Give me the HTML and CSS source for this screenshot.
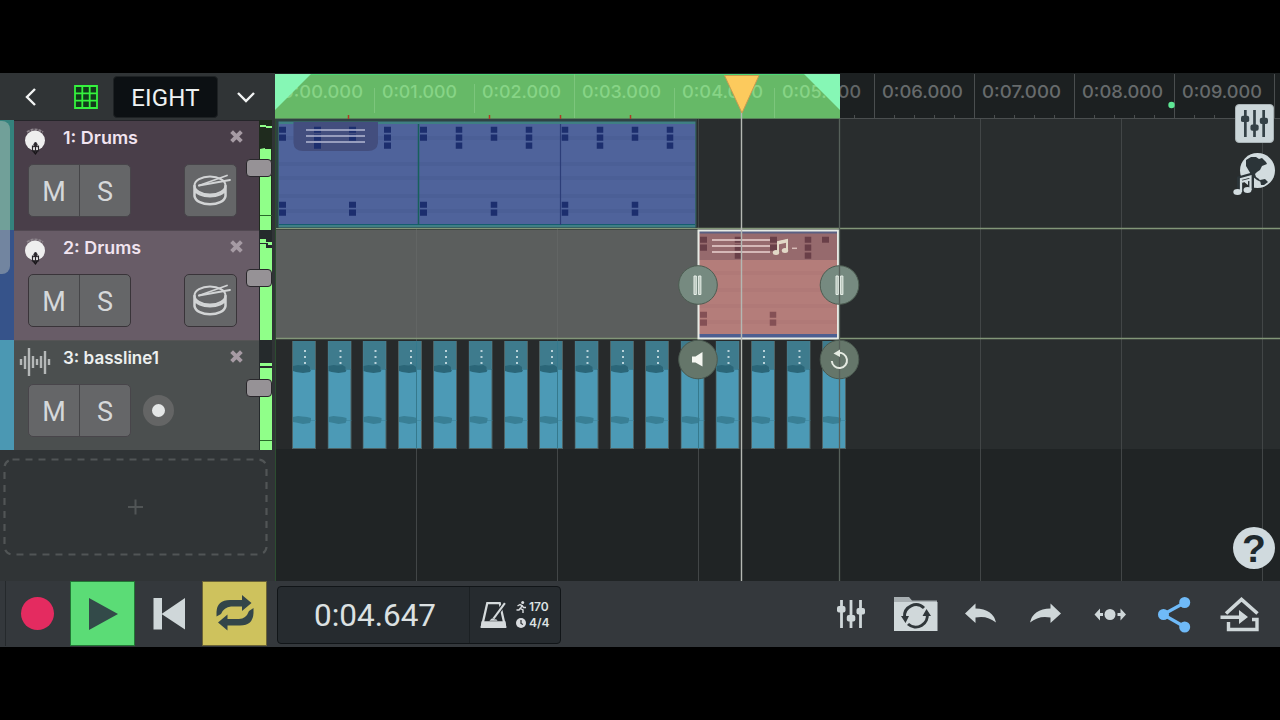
FILE: index.html
```html
<!DOCTYPE html>
<html lang="en">
<head>
<meta charset="utf-8">
<title>EIGHT</title>
<link rel="stylesheet" href="styles.css">
</head>
<body>
<svg class="defs" width="0" height="0">
  <defs>
    <linearGradient id="loop-edge" gradientUnits="userSpaceOnUse" x1="839" y1="0" x2="840" y2="0"><stop offset="0" stop-color="#87d486"/><stop offset="1" stop-color="#626667"/></linearGradient>
    <symbol id="drum" viewBox="0 0 38 32">
      <g fill="none" stroke="#d2d4d5" stroke-linecap="round">
        <ellipse cx="17" cy="11.500" rx="15.500" ry="9" stroke-width="2"/>
        <path d="M1.500 12V22C3 33 31 33 32.500 22V12M1.500 15C4 24.500 30 24.500 32.500 15" stroke-width="2.500"/>
        <path d="M6 11.500L34 1.500" stroke-width="1.800"/><path d="M6 11.500L37 6" stroke-width="1.800"/>
      </g>
    </symbol>
    <symbol id="close" viewBox="0 0 12 12"><path d="M1.500 1.500L10.500 10.500M10.500 1.500L1.500 10.500" stroke="#a69ba4" stroke-width="3.600"/></symbol>
    <symbol id="kit" viewBox="0 0 24 30">
      <path d="M4 5Q12 0 20 5" stroke="#8d858c" stroke-width="2" stroke-dasharray="3 1" fill="none"/>
      <path d="M6 20L12.500 28L18 20Z" fill="#151316"/>
      <circle cx="12" cy="13.500" r="10" fill="#eeeeee"/>
      <circle cx="12.500" cy="16.500" r="1.500" fill="#28242b"/>
      <path d="M9.500 19h6v5h-6zM10.500 17l4 3M14.500 17l-4 3M9 24h7M12.500 19v7" fill="none" stroke="#29252b" stroke-width="1.200"/>
    </symbol>
    <symbol id="mixer" viewBox="0 0 28 28">
      <path d="M4.500 0V28M14 0V28M23.500 0V28" stroke="currentColor" stroke-width="2.800"/>
      <rect x="0" y="6" width="8.500" height="6.500" rx="2" fill="currentColor"/><rect x="9.800" y="15" width="8.500" height="6.500" rx="2" fill="currentColor"/><rect x="19.500" y="8" width="8.500" height="6.500" rx="2" fill="currentColor"/>
    </symbol>
    <symbol id="audio" viewBox="0 0 25 108">
      <rect width="24" height="108" fill="#4e6264"/>
      <rect x="1" width="22" height="107" fill="#4c9ab6"/>
      <rect x="1" width="22" height="28" fill="#3e7b8d"/>
      <path d="M1 25L6 24L10 24.500L15 24L18 26V28.500H24V29H19L18 31L11 32L4 31L1 30Z" fill="#2b6678"/>
      <path d="M1 76L6 75L10 75.500L15 76L19 77V79H24V79.600H19L18 82L11 83L4 81.500L1 81Z" fill="#397f95"/>
      <path d="M12 9h2v2h-2zM12 15h2v2h-2zM12 21h2v2h-2z" fill="#b9d3da"/>
    </symbol>
    <symbol id="n1" viewBox="0 0 7 7"><rect width="7" height="6.200" fill="currentColor"/></symbol>
    <symbol id="n2" viewBox="0 0 7 15"><path d="M0 0h7v6.200H0zM0 8h7v6.200H0z" fill="currentColor"/></symbol>
    <symbol id="n3" viewBox="0 0 7 23"><path d="M0 0h7v6.200H0zM0 8h7v6.200H0zM0 16h7v6.200H0z" fill="currentColor"/></symbol>
  </defs>
</svg>

<div class="app">
  <div class="workspace">
    <aside class="sidebar">
      <header class="project">
        <svg class="back" viewBox="0 0 14 20"><path d="M12 2L4 10L12 18" fill="none" stroke="#f2f4f4" stroke-width="2.400"/></svg>
        <svg class="grid-icon" viewBox="0 0 24 24"><rect width="24" height="24" fill="#123b1b"/><path d="M1 1H23V23H1ZM8.300 1V23M15.700 1V23M1 8.300H23M1 15.700H23" fill="none" stroke="#35f23e" stroke-width="1.800"/></svg>
        <div class="project-name">EIGHT</div>
        <svg class="chevron" viewBox="0 0 20 12"><path d="M2 2L10 10L18 2" fill="none" stroke="#f2f4f4" stroke-width="2.400"/></svg>
      </header>

      <div class="tracks">
        <section class="track drums-a">
          <div class="strip"></div>
          <div class="track-body">
            <div class="track-head"><svg class="instrument"><use href="#kit"/></svg><svg class="name" width="110" height="24"><text x="0" y="17" textLength="75" lengthAdjust="spacingAndGlyphs">1: Drums</text></svg><svg class="close"><use href="#close"/></svg></div>
            <div class="controls"><div class="ms"><span>M</span><span>S</span></div><div class="pad"><svg><use href="#drum"/></svg></div></div>
          </div>
          <svg class="meter" viewBox="0 0 16 110"><rect width="16" height="110" fill="#303436"/><rect width="13" height="110" fill="#1f2b1e"/><path d="M1 5h6v1h6v2H7V7H1zM1 29l5-1v1h6v81H1z" fill="#90ff89"/><path d="M1 95.500h12" stroke="#286a29"/></svg>
          <div class="fader"></div>
        </section>
        <section class="track drums-b">
          <div class="strip"></div>
          <div class="track-body">
            <div class="track-head"><svg class="instrument"><use href="#kit"/></svg><svg class="name" width="110" height="24"><text x="0" y="17" textLength="78" lengthAdjust="spacingAndGlyphs">2: Drums</text></svg><svg class="close"><use href="#close"/></svg></div>
            <div class="controls"><div class="ms"><span>M</span><span>S</span></div><div class="pad"><svg><use href="#drum"/></svg></div></div>
          </div>
          <svg class="meter" viewBox="0 0 16 110"><rect width="16" height="110" fill="#303436"/><rect width="13" height="110" fill="#252a2c"/><path d="M1 9h6v3h6v3H9v-2H1zM1 14h6v4h6v92H1z" fill="#90ff89"/></svg>
          <div class="fader"></div>
        </section>
        <section class="track bass">
          <div class="strip"></div>
          <div class="track-body">
            <div class="track-head"><svg class="wave" viewBox="0 0 32 30"><path d="M2 12V18M6 9V22M10 1V29M14 9V21M18 12V18M22 9V21M26 4V27M30 12V18" stroke="#b5b8b8" stroke-width="2.400"/></svg><svg class="name" width="110" height="24"><text x="0" y="17" textLength="96" lengthAdjust="spacingAndGlyphs">3: bassline1</text></svg><svg class="close"><use href="#close"/></svg></div>
            <div class="controls"><div class="ms"><span>M</span><span>S</span></div><div class="arm"></div></div>
          </div>
          <svg class="meter" viewBox="0 0 16 110"><rect width="16" height="110" fill="#303436"/><rect width="13" height="110" fill="#252a2c"/><path d="M1 23h12v3H1zM1 28h12v82H1z" fill="#90ff89"/><path d="M1 100.500h12" stroke="#286a29"/></svg>
          <div class="fader"></div>
        </section>
        <div class="scroll-thumb"></div>
      </div>
      <div class="add-area">
        <svg viewBox="0 0 275 131"><rect x="4.500" y="9.500" width="262" height="95" rx="8" fill="none" stroke="#515556" stroke-width="2.200" stroke-dasharray="7 6"/><path d="M128 57H143M135.500 49.500V64.500" stroke="#515556" stroke-width="2"/></svg>
      </div>
    </aside>

    <main class="timeline">
      <svg class="canvas" viewBox="275 73 1005 508">
        <rect x="275" y="73" width="1005" height="46" fill="#1c2021"/>
        <g stroke="#4a4e4f"><path d="M874.500 74V118M974.500 74V118M1074.500 74V118M1174.500 74V118M1274.500 74V118M275 118.500H1280"/><path d="M854.500 115v4M894.500 115v4M914.500 115v4M934.500 115v4M954.500 115v4M994.500 115v4M1014.500 115v4M1034.500 115v4M1054.500 115v4M1094.500 115v4M1114.500 115v4M1134.500 115v4M1154.500 115v4M1194.500 115v4M1214.500 115v4"/></g>
        <rect x="275" y="74.500" width="565" height="44" fill="#66b967"/>
        <path d="M275 74.500H840" stroke="#4ed877"/>
        <path d="M374.500 88V113M474.500 84V113M574.500 74V118M674.500 88V118M774.500 88V118" stroke="#7cc67c"/>
        <g class="time-label lit">
          <text x="282" y="97.500" textLength="81" lengthAdjust="spacingAndGlyphs">0:00.000</text>
          <text x="382" y="97.500" textLength="75" lengthAdjust="spacingAndGlyphs">0:01.000</text>
          <text x="482" y="97.500" textLength="79" lengthAdjust="spacingAndGlyphs">0:02.000</text>
          <text x="582" y="97.500" textLength="79" lengthAdjust="spacingAndGlyphs">0:03.000</text>
          <text x="682" y="97.500" textLength="81" lengthAdjust="spacingAndGlyphs">0:04.000</text>
          <text x="782" y="97.500" textLength="79" lengthAdjust="spacingAndGlyphs" fill="url(#loop-edge)">0:05.000</text>
        </g>
        <g class="time-label">
          <text x="882" y="97.500" textLength="81" lengthAdjust="spacingAndGlyphs">0:06.000</text>
          <text x="982" y="97.500" textLength="79" lengthAdjust="spacingAndGlyphs">0:07.000</text>
          <text x="1082" y="97.500" textLength="81" lengthAdjust="spacingAndGlyphs">0:08.000</text>
          <text x="1182" y="97.500" textLength="80" lengthAdjust="spacingAndGlyphs">0:09.000</text>
        </g>
        <path d="M275 74H311L275 110ZM804 74H840V110Z" fill="#86f7b5"/>
        <path d="M348.500 115v4M489.500 115v4M560.500 115v4M630.500 115v4" stroke="#ad3c27" stroke-width="1.500"/>
        <circle cx="1171.500" cy="105" r="3.200" fill="#5ee795"/>

        <rect x="275" y="119" width="1005" height="331" fill="#292d2e"/>
        <rect x="275" y="340" width="565" height="110" fill="#272a2b"/>
        <rect x="275" y="449" width="1005" height="132" fill="#202425"/>
        <rect x="276" y="230" width="422" height="108" fill="#5b5e5d"/>
        <path d="M416.500 229V581M557.500 229V581M698.500 119V581M980.500 119V581M1121.500 119V581M1262.500 119V581" stroke="#424647"/>
        <path d="M416.500 230V338M557.500 230V338" stroke="#626564"/>
        <path d="M275 228.500H1280M275 338.500H1280" stroke="#829678" stroke-width="1.300"/>
        <path d="M275.500 119V581" stroke="#2c4d30"/>

        <g>
          <rect x="276" y="119" width="421" height="109" fill="#2f4243"/>
          <rect x="278.500" y="121.500" width="417" height="106" fill="#3f7f84"/>
          <rect x="279" y="124" width="416" height="101" fill="#4f639b"/>
          <path d="M279 138H695M279 164H695M279 178H695M279 196H695M279 211H695" stroke="#4a5d94" stroke-width="4" opacity=".6"/>
          <path d="M279 224.500H695" stroke="#155d70"/>
          <path d="M418.500 124V225" stroke="#17605c" stroke-width="1.500"/><path d="M560.500 124V225" stroke="#2c3d78" stroke-width="1.200"/>
          <path d="M293.500 122H378V143Q377 151 368 151H303Q294 151 293.500 143Z" fill="#434e7e"/>
          <g color="#1c2e6e">
            <use href="#n2" x="279" y="126.500" width="7" height="15"/><use href="#n3" x="314" y="126.500" width="7" height="23"/><use href="#n2" x="349" y="126.500" width="7" height="15"/><use href="#n3" x="384" y="126.500" width="7" height="23"/>
            <use href="#n2" x="420" y="126.500" width="7" height="15"/><use href="#n3" x="455.500" y="126.500" width="7" height="23"/><use href="#n2" x="490.500" y="126.500" width="7" height="15"/><use href="#n3" x="525.500" y="126.500" width="7" height="23"/>
            <use href="#n2" x="561.500" y="126.500" width="7" height="15"/><use href="#n3" x="596.500" y="126.500" width="7" height="23"/><use href="#n2" x="631.500" y="126.500" width="7" height="15"/><use href="#n3" x="666.500" y="126.500" width="7" height="23"/>
            <use href="#n2" x="279" y="201.500" width="7" height="15"/><use href="#n2" x="349" y="201.500" width="7" height="15"/><use href="#n2" x="420" y="201.500" width="7" height="15"/><use href="#n2" x="490.500" y="201.500" width="7" height="15"/><use href="#n2" x="561.500" y="201.500" width="7" height="15"/><use href="#n2" x="631.500" y="201.500" width="7" height="15"/>
          </g>
          <path d="M306 130H365M306 136H365M306 142H365" stroke="#b4b8d2" stroke-width="1.700"/>
        </g>

        <g>
          <use href="#audio" x="292" y="341" width="25" height="108"/><use href="#audio" x="327.500" y="341" width="25" height="108"/><use href="#audio" x="362.500" y="341" width="25" height="108"/><use href="#audio" x="398" y="341" width="25" height="108"/>
          <use href="#audio" x="433" y="341" width="25" height="108"/><use href="#audio" x="468.500" y="341" width="25" height="108"/><use href="#audio" x="504" y="341" width="25" height="108"/><use href="#audio" x="539" y="341" width="25" height="108"/>
          <use href="#audio" x="574.500" y="341" width="25" height="108"/><use href="#audio" x="610" y="341" width="25" height="108"/><use href="#audio" x="645" y="341" width="25" height="108"/><use href="#audio" x="680.500" y="341" width="25" height="108"/>
          <use href="#audio" x="715.500" y="341" width="25" height="108"/><use href="#audio" x="751" y="341" width="25" height="108"/><use href="#audio" x="786.500" y="341" width="25" height="108"/><use href="#audio" x="822" y="341" width="25" height="108"/>
          <path d="M416.500 341V449M557.500 341V449M698.500 341V449" stroke="#35798d"/>
        </g>

        <g>
          <rect x="698" y="230" width="140.500" height="109" fill="#b47d7a"/>
          <path d="M699 273H838M699 290H838M699 306H838M699 322H838" stroke="#ad7775" stroke-width="4" opacity=".5"/>
          <rect x="699" y="231" width="139" height="29" fill="#966a6d"/>
          <rect x="699" y="231" width="139" height="2.500" fill="#5b6083"/><rect x="699" y="334" width="139" height="4" fill="#4d5f91"/>
          <g color="#693f48">
            <use href="#n2" x="700" y="236.500" width="7" height="15"/><use href="#n3" x="734.500" y="236.500" width="7" height="23"/><use href="#n2" x="770" y="236.500" width="7" height="15"/><use href="#n3" x="804.500" y="236.500" width="7" height="23"/><use href="#n1" x="822" y="236.500" width="7" height="7"/>
          </g>
          <g color="#845055"><use href="#n2" x="700" y="311.500" width="7" height="15"/><use href="#n2" x="769.500" y="311.500" width="7" height="15"/></g>
          <path d="M712 240H770M712 246H770M712 252H770" stroke="#ead2d0" stroke-width="1.700"/>
          <path d="M778 252V242L787 240V250" fill="none" stroke="#e2d8c7" stroke-width="2"/><path d="M778 243L787 241" stroke="#e2d8c7" stroke-width="3"/><ellipse cx="776" cy="252.500" rx="3.200" ry="2.500" fill="#e2d8c7"/><ellipse cx="785" cy="250.500" rx="3.200" ry="2.500" fill="#e2d8c7"/><path d="M792 248.300H797" stroke="#d8bdb8" stroke-width="1.500"/>
          <path d="M698.500 230.500H838V338.500H698.500Z" fill="none" stroke="#e7ebe5" stroke-width="2"/>
        </g>
        <path d="M741.500 110V581" stroke="#b4b8b3" stroke-width="1.400"/>
        <path d="M724.500 75.500H759L742 113Z" fill="#fcca5d" stroke="#c89b50" stroke-width="1"/>
        <g fill="#768a80" stroke="#4c5c51"><circle cx="698" cy="285" r="19.300"/><circle cx="839.500" cy="285" r="19.300"/></g>
        <g fill="#65766a" stroke="#4b5a50"><circle cx="698" cy="359.500" r="19.300"/><circle cx="839.500" cy="359.500" r="19.300"/></g>
        <path d="M839.500 119V581" stroke="#56605a" stroke-width="1.300"/>
        <path d="M694 276h2.300v18.500H694zM698.600 276h2.300v18.500h-2.300zM836 276h2.300v18.500H836zM840.600 276h2.300v18.500h-2.300z" fill="#b5c3b9" stroke="#e8efe9" stroke-width="1"/>
        <path d="M692 356.500H695.500L702.500 352V366.500L695.500 362.500H692Z" fill="#f4f6f0"/>
        <path d="M831.800 361A7.600 7.600 0 1 0 838 353" fill="none" stroke="#e5ebe2" stroke-width="2"/><path d="M833.500 353.500L840 349.500V357Z" fill="#e5ebe2"/>
      </svg>
      <div class="side-tools">
        <div class="mixer-tile"><svg><use href="#mixer"/></svg></div>
        <svg class="globe" viewBox="0 0 44 46"><circle cx="25.500" cy="19.500" r="17.500" fill="#d2dcdf"/><path d="M14 9L19 6L24 6L27 8L30 7L34 11L35 13L30 15L28 19L25 21L23 23L24 26L27 28L29 31L25 29L20 25L17 20L14 15ZM28 29L33 28L36 31L32 34L29 34Z" fill="#2b3438"/><path d="M8 41V28L19 25V39" fill="none" stroke="#2b3438" stroke-width="6"/><path d="M9 41V28L18.500 25.500V39M9 31L18.500 28.500" fill="none" stroke="#d2dcdf" stroke-width="2.200"/><ellipse cx="5.500" cy="41" rx="4.200" ry="2.900" fill="#d2dcdf"/><ellipse cx="15.500" cy="39" rx="4" ry="2.900" fill="#d2dcdf"/></svg>
      </div>
      <div class="help">?</div>
    </main>
  </div>

  <footer class="transport">
    <div class="btn record"><i></i></div>
    <div class="btn play"><svg viewBox="0 0 65 65"><path d="M19 17L48 33L19 49Z" fill="#334a49"/></svg></div>
    <div class="btn rewind"><svg viewBox="0 0 65 65"><path d="M17.500 17h8.500v31.500h-8.500zM49 17v31.500L25.500 33z" fill="#cfd7d9"/></svg></div>
    <div class="btn loop"><svg viewBox="0 0 65 65"><g fill="#334549"><path d="M14.500 35.500V31Q15 19 28 19H40V14L49.500 22L40 30V25.500H29Q22 26 19 33Z"/><path d="M51.500 27V32Q51 44.500 38 44.500H25.500V49.500L16 41.500L25.500 33.500V38H37Q44 38 47 30Z"/></g></svg></div>
    <div class="display">
      <div class="clock">0:04.647</div>
      <div class="tempo">
        <svg class="metronome" viewBox="0 0 26 27"><path d="M7 2H19L24 24H2Z" fill="none" stroke="#d5dadc" stroke-width="2.200"/><path d="M1.500 19.500H24.500L25.500 26H.5Z" fill="#d5dadc"/><path d="M9 19Q13 14 17 19Z" fill="#d5dadc"/><path d="M13 17L24 2" stroke="#262b2f" stroke-width="4"/><path d="M13 17L24 2" stroke="#d5dadc" stroke-width="2"/></svg>
        <div class="values">
          <div><svg viewBox="0 0 10 12"><circle cx="6.700" cy="1.600" r="1.500" fill="#d9dcdf"/><path d="M1.500 5L4 3.500L6 4.500L4.500 7.500L7 9V12M4.500 7L3 9H.5M6 4.500L7.500 6.500H10" fill="none" stroke="#d9dcdf" stroke-width="1.400"/></svg><span>170</span></div>
          <div><svg viewBox="0 0 10 10"><circle cx="5" cy="5" r="5" fill="#d9dcdf"/><path d="M5 2V5.500L7 6.500" fill="none" stroke="#262b2f" stroke-width="1.200"/></svg><span>4/4</span></div>
        </div>
      </div>
    </div>
    <div class="actions">
      <svg class="act" viewBox="831 581 40 65"><svg x="837" y="600" width="28" height="28"><use href="#mixer"/></svg></svg>
      <svg class="act sync" viewBox="891 581 49 65"><path d="M894 598V597H909L912 600.500H937V604H894Z" fill="#a8afb2"/><path d="M894 602H937.500V631H894Z" fill="#d0d8da"/><g fill="none" stroke="#30373a" stroke-width="3"><path d="M904.500 617A11.500 11.500 0 0 1 924 608"/><path d="M927 613A11.500 11.500 0 0 1 908 624"/></g><path d="M901 616L909 616L905.500 623ZM931 616H922.500L926.500 609Z" fill="#30373a"/></svg>
      <svg class="act undo" viewBox="960 581 40 65"><path d="M965 613.500L975.500 603.500V608.500Q993 609 996 622.500Q987 615 975.500 617.500V623Z" fill="#cfd7d9"/></svg>
      <svg class="act redo" viewBox="1026 581 40 65"><path d="M1061 613.500L1050.500 603.500V608.500Q1033 609 1030 622.500Q1039 615 1050.500 617.500V623Z" fill="#cfd7d9"/></svg>
      <svg class="act spread" viewBox="1090 581 40 65"><circle cx="1110" cy="614.500" r="5.500" fill="#cfd7d9"/><path d="M1094.500 614.500L1100 608.500V613H1103V616H1100V620.500ZM1126 614.500L1120.500 608.500V613H1117.500V616H1120.500V620.500Z" fill="#cfd7d9"/></svg>
      <svg class="act share" viewBox="1154 581 40 65"><path d="M1185 602.500L1163 614.500L1185 627" fill="none" stroke="#6fbaf8" stroke-width="3.200"/><g fill="#6fbaf8"><circle cx="1163.500" cy="614.500" r="5.500"/><circle cx="1184.700" cy="602.500" r="5.500"/><circle cx="1184.700" cy="627" r="5.500"/></g></svg>
      <svg class="act export" viewBox="1219 581 42 65"><path d="M1226 613.500L1241.500 599.500L1257.500 613.500" fill="none" stroke="#cfd7d9" stroke-width="3.600"/><path d="M1228.500 622V629.500H1257V619.500H1252" fill="none" stroke="#cfd7d9" stroke-width="3.400"/><path d="M1220.500 615.500H1239V610L1248 617L1239 624V619H1220.500Z" fill="#cfd7d9"/></svg>
    </div>
  </footer>
</div>
</body>
</html>
```

FILE: styles.css
```css
* { box-sizing: border-box; }
body { margin: 0; height: 720px; background: #000; overflow: hidden; font-family: Roboto, sans-serif; }
svg { display: block; }
.defs { position: absolute; }
.app { width: 1280px; height: 720px; padding: 73px 0; display: flex; flex-direction: column; }
.workspace { display: flex; height: 508px; }
.sidebar { width: 275px; background: #303436; flex: none; }

.project { height: 47px; display: flex; align-items: center; padding-left: 23px; }
.back { width: 14px; height: 20px; margin-right: 37px; }
.grid-icon { width: 24px; height: 24px; margin-right: 15px; }
.project-name { width: 105px; height: 42px; border: 1px solid #1e2224; border-radius: 4px; background: #0c1013; color: #eff2f2; font-size: 24px; line-height: 43px; text-align: center; letter-spacing: .2px; }
.chevron { width: 20px; height: 12px; margin-left: 18px; }

.tracks { position: relative; }
.track { position: relative; height: 110px; display: flex; }
.strip { width: 14px; }
.track-body { width: 245px; border-top: 1px solid #25252a; }
.drums-a .strip { background: #34827d; }
.drums-a .track-body { background: #493e49; }
.drums-b .strip { background: #36538a; }
.drums-b .track-body { background: #685c67; border-color: #514851; }
.bass .strip { background: #4b98b3; }
.bass .track-body { background: #4b4f4f; border-color: #555455; }
.track-head { height: 43px; display: flex; padding-left: 9px; }
.instrument { width: 24px; height: 30px; margin: 6px 16px 0 0; }
.wave { width: 32px; height: 30px; margin: 6px 12px 0 -4px; }
.name { flex: none; margin-top: 6px; font-family: Inter, sans-serif; font-weight: 600; font-size: 17px; fill: #f1e4f0; }
.bass .name { fill: #edf0f0; }
.close { width: 13px; height: 13px; margin: 9px 0 0 57px; }
.controls { display: flex; padding-left: 14px; align-items: center; height: 53px; }
.ms { display: flex; width: 103px; height: 53px; border: 1px solid #48454a; border-radius: 5px; background: #656668; }
.ms span { width: 50px; line-height: 54px; text-align: center; font-size: 27px; color: #d5d8da; }
.ms span + span { border-left: 1px solid #454548; width: 51px; }
.pad { width: 53px; height: 53px; margin-left: 53px; padding: 9px 0 0 8px; border: 1px solid #48454a; border-radius: 5px; background: #656668; }
.pad svg { width: 38px; height: 32px; }
.drums-b .ms, .drums-b .pad { border-color: #393439; }
.arm { width: 31px; height: 31px; margin-left: 12px; border: 9px solid #646565; border-radius: 50%; background: #e4e6e6; }
.meter { width: 16px; height: 110px; }
.fader { position: absolute; left: 246px; top: 39px; width: 26px; height: 18px; border: 1px solid #29272b; border-radius: 4px; background: #969296; }
.scroll-thumb { position: absolute; left: 0; top: 1px; width: 10px; height: 153px; border-radius: 0 8px 8px 0; background: rgba(195, 200, 190, .43); }
.add-area svg { width: 275px; height: 131px; }

.timeline { position: relative; width: 1005px; }
.canvas { width: 1005px; height: 508px; }
.time-label { font-family: Inter, sans-serif; font-weight: 500; font-size: 17.500px; fill: #676b6c; }
.lit { fill: #87d486; }
.side-tools { position: absolute; top: 31px; right: 4px; display: flex; flex-direction: column; align-items: flex-end; gap: 8px; }
.mixer-tile { width: 39px; height: 39px; margin-right: 2px; padding: 5px; border: 1px solid #a9b3b6; border-radius: 4px; background: #cbd6d9; color: #344146; }
.mixer-tile svg { width: 27px; height: 27px; }
.globe { width: 44px; height: 46px; }
.help { position: absolute; left: 958px; top: 454px; width: 42px; height: 42px; border-radius: 50%; background: #d0dade; color: #1e282d; font: bold 39px/44px "Liberation Sans", sans-serif; text-align: center; }

.transport { height: 66px; display: flex; align-items: flex-start; background: #34383c; padding-left: 5px; }
.btn { width: 65px; height: 65px; flex: none; }
.btn svg { width: 65px; height: 65px; }
.record { border-left: 1px solid #25292c; padding: 16px 0 0 15px; }
.record i { display: block; width: 33px; height: 33px; border-radius: 50%; background: #e42b60; }
.play { background: #5bdc76; border: 1px solid #227735; }
.play svg, .loop svg { margin: -1px; }
.rewind { margin-left: 1px; }
.loop { background: #cec25d; border: 1px solid #6b6437; margin-left: 1px; }
.display { width: 284px; height: 58px; margin: 5px 0 0 10px; display: flex; border: 1px solid #111518; border-radius: 4px; background: #262b2f; }
.clock { width: 192px; padding-left: 3px; border-right: 1px solid #1b2023; color: #dce1e2; font-size: 31.500px; line-height: 58px; text-align: center; }
.tempo { display: flex; padding: 14px 0 0 10px; }
.metronome { width: 27px; height: 28px; margin-right: 9px; }
.values { display: flex; flex-direction: column; margin-top: -2px; color: #dce1e2; font: 600 12px/16px Inter, sans-serif; }
.values div { display: flex; align-items: center; gap: 3px; }
.values svg { width: 10px; height: 12px; }
.actions { display: flex; margin-left: 270px; color: #cfd7d9; }
.act { flex: none; width: 40px; height: 65px; }
.sync { width: 49px; margin-left: 20px; }
.undo { margin-left: 20px; }
.redo { margin-left: 26px; }
.spread, .share { margin-left: 24px; }
.export { width: 42px; margin-left: 25px; }
```
